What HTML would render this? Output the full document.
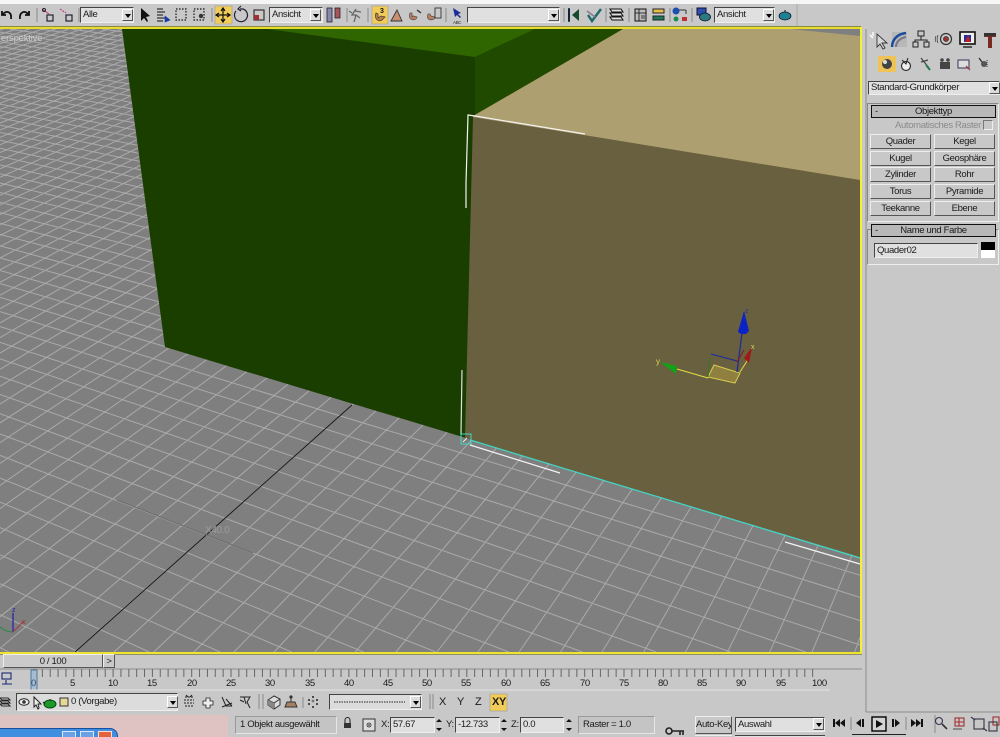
<!DOCTYPE html>
<html><head><meta charset="utf-8"><title>3ds Max</title>
<style>
html,body{margin:0;padding:0;width:1000px;height:737px;overflow:hidden}
body{position:relative;background:#c8c8c8;font-family:"Liberation Sans",sans-serif;font-size:9.5px;letter-spacing:-.35px;color:#1a1a1a}
div{position:absolute;box-sizing:border-box}
.t{white-space:nowrap;line-height:12px}
.f{background:#e0e0e0;border:1px solid;border-color:#444 #eee #eee #444;white-space:nowrap;line-height:14px;padding-left:2px;overflow:hidden}
.b{background:#c8c8c8;border:1px solid;border-color:#eee #555 #555 #eee;text-align:center;line-height:13px;white-space:nowrap;overflow:hidden}
.s{background:#c4c4c4;border:1px solid;border-color:#999 #e6e6e6 #e6e6e6 #999;white-space:nowrap;line-height:15px;padding-left:4px}
.a{background:#dcdcdc;border:1px solid;border-color:#fff #555 #555 #fff;width:11px;height:12px}
.a:after{content:"";position:absolute;left:2px;top:4px;border:3px solid transparent;border-top:4px solid #000;border-bottom:0}
.h{background:#b8b8b8;border:1px solid #111;text-align:center;line-height:11px;white-space:nowrap}
.g{border:1px solid;border-color:#888 #eee #eee #888}
svg{position:absolute;left:0;top:0;overflow:hidden}
</style></head><body>
<div style="left:0;top:0;width:1000px;height:4px;background:#f6f6f6"></div>

<svg width="1000" height="737" viewBox="0 0 1000 737">
<rect x="0" y="29" width="860" height="623" fill="#7f7f7f"/>
<g id="grid" stroke="#aaaaaa" stroke-width="1" fill="none"></g>
<line x1="75" y1="652" x2="352" y2="405" stroke="#151515" stroke-width="1"/>
<line x1="117" y1="500" x2="253" y2="553" stroke="#6c6c6c" stroke-width="1"/>
<polygon points="790,29 860,29 860,38" fill="#7f7f7f"/>
<polygon points="122,29 623,29 478,120 466,438 165,347" fill="#1a3d00"/>
<polygon points="267,29 535,29 475,57" fill="#2f6600"/>
<polygon points="475,57 535,29 623,29 475,115" fill="#204a00"/>
<polygon points="473,116 623,29 790,29 860,36 860,184 473,122" fill="#ae9f70"/>
<polygon points="473,117 860,180 860,557 465,438" fill="#68603f"/>
<polyline points="466,208 466,183 468,115 475,116 585,134" fill="none" stroke="#f4f4f4" stroke-width="1.2"/>
<polyline points="462,370 461,435" fill="none" stroke="#e0e0e0" stroke-width="1.2"/>
<line x1="470" y1="445" x2="560" y2="473" stroke="#f4f4f4" stroke-width="1.2"/>
<line x1="785" y1="542" x2="860" y2="564" stroke="#f4f4f4" stroke-width="1.2"/>
<line x1="470" y1="440" x2="860" y2="558" stroke="#3fd8c4" stroke-width="1.2"/>
<rect x="461" y="434" width="10" height="10" fill="none" stroke="#3fd8c4" stroke-width="1"/>
<line x1="463" y1="442" x2="467" y2="438" stroke="#eee"/>
<!-- gizmo -->
<polygon points="714,365 740,373 735,383 708,377" fill="#8f8040" stroke="#d8cc50" stroke-width="1"/>
<line x1="677" y1="369" x2="708" y2="378" stroke="#e8dc40" stroke-width="1"/>
<line x1="708" y1="377" x2="710" y2="358" stroke="#2e7a20" stroke-width="1"/>
<line x1="740" y1="372" x2="749" y2="358" stroke="#e8dc40" stroke-width="1"/>
<line x1="711" y1="354" x2="737" y2="361" stroke="#1a2aa0" stroke-width="1"/>
<line x1="737" y1="372" x2="742" y2="333" stroke="#1a2aa0" stroke-width="1.2"/>
<line x1="737" y1="362" x2="744" y2="350" stroke="#8a1a1a" stroke-width="1"/>
<polygon points="744,311 738,332 741,334 746,334 749,331" fill="#0b22c4"/>
<polygon points="752,347 744,358 749,363" fill="#a01818"/>
<polygon points="660,362 677,366 676,374" fill="#14a014"/>
<text x="745" y="313" font-size="7" fill="#26389a" font-family="Liberation Sans">z</text>
<text x="751" y="349" font-size="7" fill="#e0d850" font-family="Liberation Sans">x</text>
<text x="656" y="364" font-size="8" fill="#e0d850" font-family="Liberation Sans">y</text>
<!-- tripod -->
<line x1="13" y1="632" x2="13" y2="613" stroke="#2020a8" stroke-width="1.2"/>
<line x1="13" y1="632" x2="24" y2="621" stroke="#a83a3a" stroke-width="1"/>
<path d="M0 627 Q6 632 13 632" stroke="#208a40" fill="none"/>
<text x="12" y="612" font-size="7" fill="#2020a8" font-family="Liberation Sans">z</text>
<text x="22" y="624" font-size="7" fill="#b03030" font-family="Liberation Sans">x</text>
<text x="205" y="533" font-size="10" fill="#9c9c9c" font-family="Liberation Sans">X40.0</text>
<text x="1" y="41" font-size="9.5" letter-spacing="-.2" fill="#cfcfcf" font-family="Liberation Sans">erspektive</text>
<!-- yellow border -->
<rect x="0" y="26" width="861" height="1" fill="#8a8a40"/>
<rect x="0" y="27" width="861" height="2" fill="#e8dc30"/>
<rect x="860" y="27" width="2" height="627" fill="#f4f030"/>
<rect x="0" y="652" width="862" height="2" fill="#ece430"/>
<rect x="0" y="654" width="862" height="1" fill="#8e8e68"/>

<!-- highlight buttons -->
<rect x="215" y="6" width="17" height="18" fill="#f2cc58" stroke="#999" stroke-width=".6"/>
<rect x="372" y="6" width="16" height="18" fill="#f2cc58" stroke="#999" stroke-width=".6"/>
<rect x="878" y="56" width="18" height="16" fill="#eec458"/>
<rect x="490" y="694" width="17" height="17" fill="#f2cc58" stroke="#999" stroke-width=".6"/>
<rect x="16" y="693" width="162" height="18" fill="#dcdcdc"/>
<rect x="329" y="694" width="93" height="16" fill="#dcdcdc"/>

<!-- toolbar separators -->
<g stroke="#8a8a8a" stroke-width="1">
<path d="M37 8V22M79 8V22M212 8V22M347 8V22M368 8V22M446 8V22M564 8V22M606 8V22M629 8V22M670 8V22M692 8V22"/>
<path d="M259 694V709M263 694V709M303 697V708M430 694V709M433 694V709"/>
<path d="M935 715V733M851 717V730M906 717V730"/>
</g>
<path d="M797 4V26" stroke="#aaa"/>
<path d="M866 29V712M866 712H1000" stroke="#8c8c8c" fill="none"/>

<!-- toolbar icons -->
<g fill="none" stroke="#111" stroke-width="1.5">
<path d="M11 19C12 12 7 10 3 14M2 11V15H6" stroke-width="1.8"/>
<path d="M20 19C19 12 25 10 28 14M29 11V15H25" stroke-width="1.8"/>
<path d="M42 9L49 14" stroke="#c03070" stroke-width="1"/><rect x="47" y="15" width="6" height="6" stroke="#223" stroke-width="1.2"/><circle cx="44" cy="10" r="1.5" stroke="#223" stroke-width="1"/>
<path d="M60 9L66 13" stroke="#c03070" stroke-width="1" stroke-dasharray="2 1"/><rect x="66" y="15" width="6" height="6" stroke="#223" stroke-width="1.2"/>
<path d="M141 8V21L144 18L147 22L148 21L146 17L150 16Z" fill="#111" stroke="none"/>
<path d="M157 9H163M157 12H165M157 15H163M157 18H165M157 21H163" stroke-width="1"/><path d="M165 16L165 22L170 20Z" fill="#1a3ca8" stroke="#1a3ca8" stroke-width=".6"/>
<rect x="176" y="9" width="10" height="11" stroke-dasharray="1.5 1.5" stroke-width="1.2"/>
<rect x="194" y="9" width="10" height="11" stroke-dasharray="1.5 1.5" stroke-width="1.2"/><circle cx="201" cy="16" r="2.2" fill="#333" stroke="none"/>
<path d="M223 9V21M217 15H229M221 11L223 8L225 11M221 19L223 22L225 19M219 13L216 15L219 17M227 13L230 15L227 17" stroke-width="1.2"/>
<path d="M236 11A6.5 6.5 0 1 0 243 9L240 9M241 6L238 9L241 11" stroke-width="1.2" stroke="#223"/>
<rect x="254" y="10" width="10" height="10" stroke="#333" stroke-width="1.2"/><rect x="254" y="15" width="5" height="5" fill="#a03030" stroke="none"/>
<rect x="327" y="8" width="5" height="14" fill="#88a" stroke="#223" stroke-width=".8"/><rect x="335" y="8" width="5" height="10" fill="#a55" stroke="#223" stroke-width=".8"/>
<path d="M356 9L352 15L356 15L354 22M356 15L360 18M352 13L349 11M355 11L361 12" stroke="#666" stroke-width="1.3"/>
<path d="M376 13C374 19 378 22 382 20L385 17L381 16L378 18L378 14Z" fill="#c88040" stroke="#444" stroke-width=".8"/>
<text x="380" y="13" font-size="7" fill="#111" stroke="none" font-family="Liberation Sans" font-weight="bold">3</text>
<path d="M391 21L397 10L402 21Z" fill="#c89070" stroke="#333" stroke-width=".9"/>
<path d="M410 13C408 19 412 21 416 19L417 17L413 16L412 17L412 13Z" fill="#c08060" stroke="#555" stroke-width=".8"/><path d="M417 10L421 13" stroke="#444"/>
<path d="M428 14C426 19 430 21 434 19L435 17L431 16L430 14Z" fill="#c08060" stroke="#555" stroke-width=".8"/><rect x="435" y="8" width="6" height="10" stroke-width=".9" stroke="#333"/>
<path d="M453 8L455 17L457 15L460 18L461 17L458 14L461 13Z" fill="#1a2c9c" stroke="none"/>
<path d="M569 8V22" stroke="#1a5a5a" stroke-width="2"/><path d="M579 9V21L572 15Z" fill="#144a2c" stroke="none"/><path d="M569 9V21" stroke="#113"/>
<path d="M588 15L592 21L601 9" stroke="#1f6a6a" stroke-width="2.4"/><path d="M587 11L595 17" stroke="#8a7a90" stroke-width="1.6"/>
<path d="M610 9H621L623 12H612ZM610 13H621L623 16H612ZM610 17H621L623 20H612Z" stroke-width="1" fill="#ddd"/>
<rect x="635" y="9" width="11" height="12" fill="#bbb" stroke-width="1"/><path d="M635 13H646M639 9V21M641 16H645M641 18H645" stroke-width=".8"/>
<rect x="653" y="9" width="11" height="4" fill="#e8c040" stroke="#223" stroke-width="1"/><rect x="653" y="16" width="11" height="4" fill="#1f7a50" stroke="#223" stroke-width="1"/>
<circle cx="676" cy="11" r="3.5" fill="#1a50b0" stroke="none"/><circle cx="676" cy="19" r="2.5" fill="#1f8a50" stroke="none"/><rect x="682" y="17" width="5" height="4" fill="#c03030" stroke="none"/><path d="M679 10H686M686 10V14" stroke="#333" stroke-width="1"/>
<rect x="697" y="8" width="9" height="7" fill="#2a50b0" stroke="#113" stroke-width="1"/><ellipse cx="705" cy="17" rx="5.5" ry="4" fill="#2a7a80" stroke="#113" stroke-width=".8"/>
<ellipse cx="785" cy="16" rx="6" ry="4" fill="#1f8090" stroke="#113" stroke-width=".7"/><path d="M785 10V12" stroke-width="1"/>
</g>
<text x="453" y="24" font-size="4.5" fill="#333" font-family="Liberation Sans">ABC</text>

<!-- panel icons -->
<g fill="none" stroke="#222" stroke-width="1.2">
<path d="M877 34L877 47L880 44L883 49L885 48L882 43L887 43Z" fill="#d8d8d8" stroke="#333" stroke-width=".9"/>
<path d="M870 35L873 38M873 32V36" stroke="#fff" stroke-width="1.4"/>
<rect x="892" y="32" width="15" height="15" fill="#b8b8b8" stroke="none"/>
<path d="M892 47C892 40 897 34 906 33" stroke="#1a4a9a" stroke-width="2.4"/><path d="M896 47C896 42 900 38 906 37" stroke="#778" stroke-width="2"/>
<rect x="918" y="31" width="6" height="5" stroke-width="1"/><rect x="913" y="42" width="5" height="5" stroke-width="1"/><rect x="924" y="42" width="5" height="5" stroke-width="1"/><path d="M921 36V40M915 42V40H927V42" stroke-width="1"/>
<circle cx="946" cy="39" r="5.5" stroke="#333"/><circle cx="946" cy="39" r="2.5" fill="#a03030" stroke="#333" stroke-width=".8"/><path d="M938 35C937 38 937 41 938 43M936 36C935 38 935 41 936 42" stroke-width=".9" stroke="#555"/>
<rect x="960" y="32" width="15" height="12" fill="#eee" stroke="#111" stroke-width="1.6"/><rect x="964" y="35" width="7" height="7" fill="#2030a0" stroke="none"/><path d="M968 35L971 42H965Z" fill="#c02020" stroke="none"/><path d="M963 47H972" stroke-width="1.4"/>
<path d="M984 34H996V37H992V48H988V37H984Z" fill="#7a2a20" stroke="none"/><rect x="984" y="33" width="12" height="3" fill="#333" stroke="none"/>
<circle cx="887" cy="64" r="5" fill="#444" stroke="none"/><circle cx="885" cy="62" r="2" fill="#ddd" stroke="none"/>
<circle cx="906" cy="66" r="4.5" fill="#eee" stroke="#333"/><path d="M902 60L906 64L908 58" stroke-width="1"/>
<path d="M921 58L929 68M921 62L928 60" stroke="#444" stroke-width="1.2"/><path d="M926 65L930 70" stroke="#2a7a50" stroke-width="2"/>
<rect x="940" y="62" width="10" height="7" fill="#444" stroke="none"/><circle cx="942" cy="60" r="1.8" fill="#444" stroke="none"/><circle cx="948" cy="60" r="1.8" fill="#444" stroke="none"/>
<rect x="958" y="60" width="11" height="8" fill="#ddd" stroke="#335" stroke-width="1"/><path d="M966 66L970 70" stroke="#a03030"/>
<path d="M979 58L985 66" stroke="#333" stroke-width="1.3"/><circle cx="984" cy="64" r="3" fill="#555" stroke="none"/><path d="M987 60V68" stroke="#333" stroke-width="1" stroke-dasharray="1 1"/>
</g>

<!-- timeline -->
<line x1="0" y1="669" x2="862" y2="669" stroke="#8e8e8e" stroke-width="1"/>
<line x1="34" y1="673" x2="820" y2="673" stroke="#666" stroke-width="8" stroke-dasharray="1 6.86"/>
<rect x="31" y="670" width="6" height="20" fill="#a6bcd0" stroke="#5078a0" stroke-width="1"/>
<line x1="0" y1="690" x2="830" y2="690" stroke="#e2e2e2"/>
<g fill="none" stroke="#1a2878" stroke-width="1.1"><rect x="2" y="673" width="9" height="6"/><path d="M6 680V684M2 684H12"/></g>

<!-- layer row icons -->
<g fill="none" stroke="#222" stroke-width="1">
<path d="M0 698H8L10 700H2ZM0 701H8L10 703H2ZM0 704H8L10 706H2Z" fill="#ddd"/>
<ellipse cx="24" cy="702" rx="5" ry="3.2" fill="#eee"/><circle cx="24" cy="702" r="1.8" fill="#333" stroke="none"/>
<path d="M34 697V707L36 705L38 709L39 708L38 704L41 704Z" fill="#eee"/>
<ellipse cx="50" cy="704" rx="6" ry="4" fill="#1a9a2a" stroke="#064a10"/><path d="M50 699V701M43 702L45 704" stroke-width="1"/>
<rect x="60" y="698" width="8" height="8" fill="#e8d898" stroke="#333"/>
<path d="M185 697H193M184 700H194M184 703H194M185 706H193" stroke-dasharray="2 1"/><path d="M186 695L188 697M192 695L190 697"/>
<path d="M206 698H210V701H213V705H210V708H206V705H203V701H206Z" fill="#eee" stroke-width=".8"/>
<path d="M222 697L226 706H232M222 707L232 703M226 699L232 706" stroke-width="1"/>
<path d="M240 697H250L247 702L250 708M244 697L246 704M240 700L244 702" stroke-width="1"/>
<path d="M268 700L274 696L280 699V705L274 709L268 705Z" fill="#ddd" stroke="#333"/><path d="M268 700L274 703L280 699M274 703V709" stroke="#333"/><path d="M268 700L274 703V709L268 705Z" fill="#888" stroke="none"/>
<path d="M291 696V702M287 702H295L297 707H285Z" fill="#a88060" stroke="#333"/><circle cx="291" cy="697" r="1.6" fill="#333" stroke="none"/>
</g>
<g fill="#222"><circle cx="313" cy="697" r="1"/><circle cx="309" cy="700" r="1"/><circle cx="317" cy="700" r="1"/><circle cx="313" cy="701" r="1.4" fill="#777"/><circle cx="309" cy="704" r="1"/><circle cx="317" cy="704" r="1"/><circle cx="313" cy="707" r="1"/></g>
<path d="M334 702H405" stroke="#222" stroke-dasharray="1.5 1"/>

<!-- status & play icons -->
<g fill="none" stroke="#222" stroke-width="1">
<rect x="344" y="723" width="7" height="5" fill="#333" stroke="none"/><path d="M345 723V720A2.5 2.5 0 0 1 350 720V723"/>
<rect x="363" y="719" width="12" height="12" fill="#ddd" stroke="#333"/><circle cx="369" cy="725" r="2" stroke-width=".8"/><circle cx="369" cy="725" r=".8" fill="#111" stroke="none"/>
<path d="M436 722L439 719L442 722Z M436 728L439 731L442 728Z" fill="#111" stroke="none"/>
<path d="M501 722L504 719L507 722Z M501 728L504 731L507 728Z" fill="#111" stroke="none"/>
<path d="M566 722L569 719L572 722Z M566 728L569 731L572 728Z" fill="#111" stroke="none"/>
<circle cx="669" cy="731" r="3" stroke-width="1.6"/><path d="M672 731H684M680 731V735M683 731V735" stroke-width="1.6"/>
</g>
<g fill="#111">
<rect x="833" y="719" width="2" height="8"/><path d="M835 723L840 719V727ZM840 723L845 719V727Z"/>
<path d="M856 723L861 719V727Z"/><rect x="862" y="719" width="2" height="8"/>
<rect x="872" y="717" width="14" height="14" fill="#d4d4d4" stroke="#000" stroke-width="1.4"/><path d="M876 720V728L883 724Z"/>
<rect x="892" y="719" width="2" height="8"/><path d="M895 719V727L900 723Z"/>
<path d="M911 719L916 723L911 727ZM916 719L921 723L916 727Z"/><rect x="921" y="719" width="2" height="8"/>
</g>
<g fill="none" stroke="#333" stroke-width="1.1">
<circle cx="939" cy="721" r="3.5" stroke="#335"/><path d="M942 724L947 729" stroke-width="1.6"/>
<rect x="955" y="718" width="9" height="8" stroke="#a03030"/><path d="M959 718V726M955 722H964" stroke="#a03030"/><path d="M953 729H962" stroke="#555"/>
<rect x="974" y="719" width="10" height="10" stroke="#334"/><path d="M971 717L975 720M987 731L983 728" stroke="#334"/>
<rect x="993" y="717" width="6" height="8" stroke="#a03030"/><rect x="989" y="722" width="8" height="9" stroke="#334"/>
</g>
<script>
(function(){
var O=[206,535],VA=[-1800,-240],VB=[1238,-383],A=0.0122,B=0.01865;
var X0=0,X1=860,Y0=29,Y1=652;
function P(u,v){var d=1+u*A+v*B;return [(O[0]+u*A*VA[0]+v*B*VB[0])/d,(O[1]+u*A*VA[1]+v*B*VB[1])/d];}
var s='';
function seg(p,q){
 var dx=q[0]-p[0],dy=q[1]-p[1],t0=-1e9,t1=1e9,t,a,b;
 if(dx!==0){a=(X0-p[0])/dx;b=(X1-p[0])/dx;if(a>b){t=a;a=b;b=t;}t0=Math.max(t0,a);t1=Math.min(t1,b);}
 if(dy!==0){a=(Y0-p[1])/dy;b=(Y1-p[1])/dy;if(a>b){t=a;a=b;b=t;}t0=Math.max(t0,a);t1=Math.min(t1,b);}
 if(t0>=t1)return '';
 return 'M'+(p[0]+dx*t0).toFixed(1)+' '+(p[1]+dy*t0).toFixed(1)+'L'+(p[0]+dx*t1).toFixed(1)+' '+(p[1]+dy*t1).toFixed(1);
}
for(var u=-60;u<=260;u++){ s+=seg(P(u,0),P(u,1)); }
for(var v=-45;v<=260;v++){ s+=seg(P(0,v),P(1,v)); }
var e=document.createElementNS('http://www.w3.org/2000/svg','path');
e.setAttribute('d',s);document.getElementById('grid').appendChild(e);
})();
</script>
</svg>

<!-- toolbar dropdowns -->
<div class="f" style="left:80px;top:7px;width:54px;height:16px">Alle</div><div class="a" style="left:122px;top:9px"></div>
<div class="f" style="left:269px;top:7px;width:54px;height:16px">Ansicht</div><div class="a" style="left:310px;top:9px"></div>
<div class="f" style="left:467px;top:7px;width:93px;height:16px"></div><div class="a" style="left:548px;top:9px"></div>
<div class="f" style="left:714px;top:7px;width:61px;height:16px">Ansicht</div><div class="a" style="left:763px;top:9px"></div>

<!-- command panel -->
<div class="f" style="left:868px;top:81px;width:132px;height:14px;line-height:12px">Standard-Grundkörper</div><div class="a" style="left:989px;top:82px"></div>
<div class="g" style="left:867px;top:103px;width:132px;height:119px"></div>
<div class="h" style="left:871px;top:105px;width:125px;height:13px">Objekttyp</div>
<div class="t" style="left:875px;top:106px">-</div>
<div class="t" style="left:895px;top:120px;color:#8a8a8a">Automatisches Raster</div>
<div style="left:983px;top:120px;width:10px;height:10px;border:1px solid;border-color:#777 #eee #eee #777"></div>
<div class="b" style="left:870px;top:134px;width:61px;height:15px">Quader</div><div class="b" style="left:934px;top:134px;width:61px;height:15px">Kegel</div>
<div class="b" style="left:870px;top:151px;width:61px;height:15px">Kugel</div><div class="b" style="left:934px;top:151px;width:61px;height:15px">Geosphäre</div>
<div class="b" style="left:870px;top:167px;width:61px;height:15px">Zylinder</div><div class="b" style="left:934px;top:167px;width:61px;height:15px">Rohr</div>
<div class="b" style="left:870px;top:184px;width:61px;height:15px">Torus</div><div class="b" style="left:934px;top:184px;width:61px;height:15px">Pyramide</div>
<div class="b" style="left:870px;top:201px;width:61px;height:15px">Teekanne</div><div class="b" style="left:934px;top:201px;width:61px;height:15px">Ebene</div>
<div class="g" style="left:867px;top:229px;width:132px;height:36px"></div>
<div class="h" style="left:871px;top:224px;width:125px;height:13px">Name und Farbe</div>
<div class="t" style="left:875px;top:225px">-</div>
<div class="f" style="left:874px;top:243px;width:104px;height:15px">Quader02</div>
<div style="left:981px;top:242px;width:14px;height:8px;background:#000"></div>
<div style="left:981px;top:250px;width:14px;height:8px;background:#fff"></div>

<!-- time slider -->
<div class="b" style="left:3px;top:654px;width:100px;height:14px;background:#cacaca">0 / 100</div>
<div class="b" style="left:103px;top:654px;width:12px;height:14px">&gt;</div>

<!-- ruler labels -->
<div class="t" style="left:31px;top:678px;color:#34507a">0</div>
<div class="t" style="left:70px;top:678px">5</div><div class="t" style="left:108px;top:678px">10</div><div class="t" style="left:147px;top:678px">15</div><div class="t" style="left:187px;top:678px">20</div><div class="t" style="left:226px;top:678px">25</div><div class="t" style="left:265px;top:678px">30</div><div class="t" style="left:305px;top:678px">35</div><div class="t" style="left:344px;top:678px">40</div><div class="t" style="left:383px;top:678px">45</div><div class="t" style="left:422px;top:678px">50</div><div class="t" style="left:461px;top:678px">55</div><div class="t" style="left:501px;top:678px">60</div><div class="t" style="left:540px;top:678px">65</div><div class="t" style="left:580px;top:678px">70</div><div class="t" style="left:619px;top:678px">75</div><div class="t" style="left:658px;top:678px">80</div><div class="t" style="left:697px;top:678px">85</div><div class="t" style="left:736px;top:678px">90</div><div class="t" style="left:776px;top:678px">95</div><div class="t" style="left:812px;top:678px">100</div>

<!-- layer row -->
<div class="f" style="left:16px;top:693px;width:162px;height:18px;background:transparent"></div>
<div class="t" style="left:71px;top:696px">0 (Vorgabe)</div>
<div class="a" style="left:167px;top:696px"></div>
<div class="f" style="left:329px;top:694px;width:93px;height:16px;background:transparent"></div>
<div class="a" style="left:410px;top:696px"></div>
<div class="t" style="left:439px;top:696px;font-size:11px">X</div>
<div class="t" style="left:457px;top:696px;font-size:11px">Y</div>
<div class="t" style="left:475px;top:696px;font-size:11px">Z</div>
<div class="t" style="left:492px;top:696px;font-size:11px;font-weight:bold">XY</div>

<!-- status row -->
<div style="left:0;top:715px;width:228px;height:22px;background:#dfc3c3"></div>
<div style="left:0;top:728px;width:118px;height:9px;background:#3f8ee0;border-radius:0 8px 0 0;border:1px solid #1a4f9c;border-left:0;border-bottom:0"></div>
<div style="left:62px;top:731px;width:14px;height:6px;background:#6ba2e6;border:1px solid #dce8f8;border-bottom:0"></div>
<div style="left:80px;top:731px;width:14px;height:6px;background:#6ba2e6;border:1px solid #dce8f8;border-bottom:0"></div>
<div style="left:98px;top:731px;width:14px;height:6px;background:#e0643c;border:1px solid #f8e0d8;border-bottom:0"></div>
<div class="s" style="left:235px;top:716px;width:102px;height:18px">1 Objekt ausgewählt</div>
<div class="t" style="left:381px;top:719px">X:</div>
<div class="f" style="left:390px;top:717px;width:45px;height:16px">57.67</div>
<div class="t" style="left:446px;top:719px">Y:</div>
<div class="f" style="left:455px;top:717px;width:45px;height:16px">-12.733</div>
<div class="t" style="left:511px;top:719px">Z:</div>
<div class="f" style="left:520px;top:717px;width:44px;height:16px">0.0</div>
<div class="s" style="left:578px;top:716px;width:77px;height:18px">Raster = 1.0</div>
<div class="b" style="left:695px;top:716px;width:37px;height:18px;line-height:15px">Auto-Key</div>
<div style="left:695px;top:735px;width:37px;height:2px;background:#c8c8c8;border-top:1px solid #eee"></div>
<div class="f" style="left:735px;top:717px;width:90px;height:15px">Auswahl</div>
<div class="a" style="left:813px;top:718px"></div>
<div style="left:735px;top:735px;width:90px;height:2px;background:#e0e0e0;border-top:1px solid #444"></div>
<div style="left:852px;top:734px;width:54px;height:3px;border-top:1px solid #222"></div>
</body></html>
